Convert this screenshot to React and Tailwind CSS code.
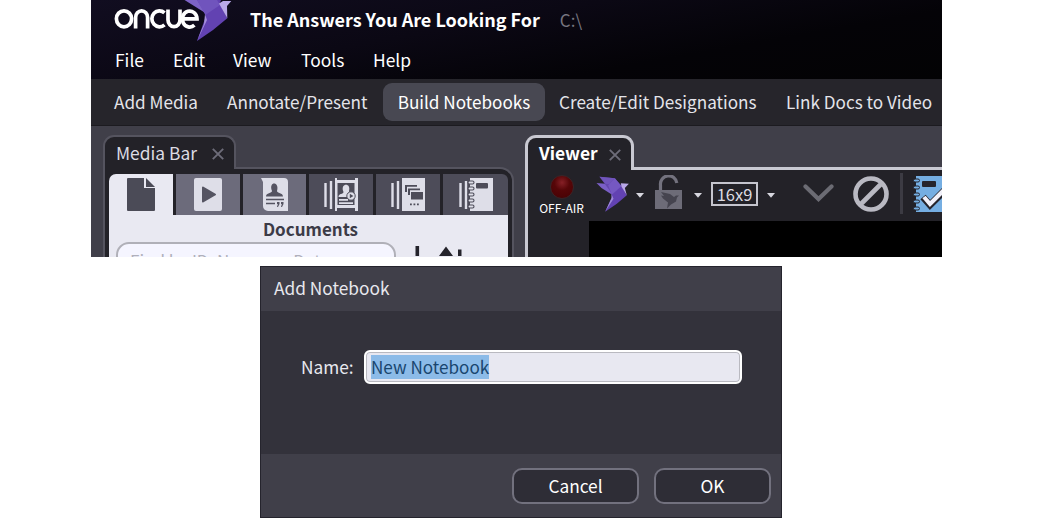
function Bird({ className }) {
  return (
    <svg className={className} viewBox="0 0 98 108">
      <path d="M1 21L28 23L46 36L48 56L16 36z" fill="#7a5fc6" />
      <path d="M10 2L56 7L66 34L48 54L26 24z" fill="#6447ae" />
      <path d="M10 2L56 7L44 26L28 23z" fill="#7055bb" />
      <path d="M56 7L78 32L92 58L62 83L27 107L47 64L46 50L36 28z" fill="#6242b2" />
      <path d="M56 7L76 30L47 56L36 28z" fill="#7558c2" />
      <path d="M46 54L52 68L27 107L46 66z" fill="#9d88d8" />
      <path d="M74 22L98 23L86 36L92 58L76 32z" fill="#b9a8e8" />
    </svg>
  );
}

function Close({ className }) {
  return (
    <svg className={className} viewBox="0 0 12 12" stroke="#6d6c79" strokeWidth="1.9">
      <path d="M.8.8l10.4 10.4M11.2.8L.8 11.2" />
    </svg>
  );
}

function Caret({ className }) {
  return (
    <svg className={className} viewBox="0 0 8 5">
      <path d="M0 0h8L4 4.8z" fill="#d7d7df" />
    </svg>
  );
}

function Header() {
  return (
    <header className="h-[79px] shrink-0 bg-[linear-gradient(170deg,#110d20_0%,#0b0814_40%,#040307_70%,#030304_100%)] text-white">
      <div className="flex h-[42px] items-start">
        <svg className="ml-[22px] h-[42px] w-[124px] shrink-0" viewBox="0 0 124 42">
          <g fill="none" stroke="#fff" strokeWidth="3.7">
            <ellipse cx="11" cy="18.800" rx="7.600" ry="8" />
            <path d="M22.600 28.600V17.500a6 6.600 0 0 1 12 0v11.100" />
            <path d="M51.500 12.800a7.600 8 0 1 0 0 12" />
            <path d="M55 9.500V20a6 6.600 0 0 0 12 0V9.500" />
            <path d="M70 18.800h14a7.300 8 0 1 0-2.600 6.400" />
          </g>
          <path d="M71.500 0L85 0L94 14z" fill="#7d63c6" />
          <path d="M84 0H108L106.700 3.300L114.300 18.300L100 30L84 41L92.300 18L92.300 13.300z" fill="#6242b2" />
          <path d="M84 0H104L107 5L92.300 15z" fill="#7054bd" />
          <path d="M92 14L94 20L84 41L91 24z" fill="#a48fda" />
          <path d="M106 3.500L110 1L118.300 1L114 6L114.300 18.300z" fill="#b9a8e8" />
        </svg>
        <div className="mt-[6px] pl-[13px] text-[18px] leading-[27px] font-bold tracking-[-0.02px] whitespace-nowrap">The Answers You Are Looking For</div>
        <div className="mt-[6px] pl-[20px] text-[17px] leading-[28px] text-[#777681]">C:\</div>
      </div>
      <nav className="flex h-[36px] pl-[24px] text-[17.400px] leading-[35px]">
        <span className="w-[58px]">File</span>
        <span className="w-[60px]">Edit</span>
        <span className="w-[68px]">View</span>
        <span className="w-[72px]">Tools</span>
        <span>Help</span>
      </nav>
    </header>
  );
}

function Workspaces() {
  return (
    <nav className="flex h-[47px] shrink-0 items-center border-b border-[#1c1b20] bg-[#26252b] pl-[23px] text-[17.150px] whitespace-nowrap text-[#e4e4ea]">
      <span className="w-[113px] shrink-0">Add Media</span>
      <span className="w-[156px] shrink-0">Annotate/Present</span>
      <span className="flex h-[38px] w-[162px] shrink-0 items-center justify-center rounded-[9px] bg-[#484852] text-white">Build Notebooks</span>
      <span className="w-[241px] shrink-0 pl-[14px]">Create/Edit Designations</span>
      <span>Link Docs to Video</span>
    </nav>
  );
}

function MediaIcons() {
  return (
    <div className="flex h-[41px] gap-[3px]">
      <div className="flex w-[64px] justify-center rounded-tl-[7px] bg-[#e9e9f2] pt-[4px]">
        <svg className="h-[33px] w-[28px]" viewBox="0 0 28 33" fill="#4b4b57">
          <path d="M1 0h16v10h11v22a1 1 0 0 1-1 1H1a1 1 0 0 1-1-1V1a1 1 0 0 1 1-1z" />
          <path d="M19 0l9 9h-9z" />
        </svg>
      </div>
      <div className="flex w-[64px] justify-center bg-[#6c6b7b] pt-[3px]">
        <svg className="h-[34px] w-[28px]" viewBox="0 0 28 34">
          <rect y="1" width="28" height="33" rx="2" fill="#dedee8" />
          <path d="M9 10.500l12 7-12 7z" fill="#555462" stroke="#555462" strokeWidth="2" strokeLinejoin="round" />
        </svg>
      </div>
      <div className="flex w-[64px] justify-center bg-[#6c6b7b] pt-[3px]">
        <svg className="h-[34px] w-[27px]" viewBox="0 0 27 34">
          <path d="M0 1h23a4 4 0 0 1 4 4v29H7a5 5 0 0 1-5-5V5z" fill="#dedee8" />
          <path d="M5 19.500c0-4 6-3 6-5.500-4-10 8-10 5 0 0 2.500 6 1.500 6 5.500z" fill="#555462" />
          <path d="M5 22.500h18M5 26.500h9" stroke="#555462" strokeWidth="1.500" />
          <path d="M16 25h2.500v2l-1.500 3h-1l.8-3H16zM20 25h2.500v2L21 30h-1l.8-3H20z" fill="#555462" />
        </svg>
      </div>
      <div className="flex w-[64px] justify-center bg-[#4d4c59] pt-[3px]">
        <svg className="h-[34px] w-[34px]" viewBox="0 0 34 34">
          <path d="M1.500 6v24M7 4v28" stroke="#dedee8" strokeWidth="2.400" />
          <path d="M11 1h2v2h18V1h3v33h-3v-3H13v3h-2z" fill="#dedee8" />
          <path d="M13.500 6h17v22h-17z" fill="#4d4c59" />
          <path d="M14.500 20c0-4 5-2.500 5-5-4-9 8-10 5.500-1 0 3 2 2.500 3 4v2z" fill="#dedee8" />
          <circle cx="27" cy="19" r="4.200" fill="#dedee8" stroke="#4d4c59" />
          <path d="M25.800 16.800l3.600 2.200-3.600 2.200z" fill="#4d4c59" />
          <path d="M15 22.800h9M15 26.200h14" stroke="#dedee8" strokeWidth="1.700" />
        </svg>
      </div>
      <div className="flex w-[64px] justify-center bg-[#4d4c59] pt-[3px]">
        <svg className="h-[34px] w-[34px]" viewBox="0 0 34 34">
          <path d="M1.500 6v24M7 4v28" stroke="#dedee8" strokeWidth="2.400" />
          <path d="M11 1h23v33H11z" fill="#dedee8" />
          <path d="M14 8h12v1.800H16V15h-2zM17 11.500h12v1.800H19V18h-2zM20 15h12v7.500H20z" fill="#4d4c59" />
          <path d="M19 26.500h1.800v1.800H19zM22.500 26.500h1.800v1.800h-1.800zM26 26.500h1.800v1.800H26z" fill="#4d4c59" />
        </svg>
      </div>
      <div className="flex w-[65px] justify-center rounded-tr-[6px] bg-[#4d4c59] pt-[3px]">
        <svg className="h-[34px] w-[34px]" viewBox="0 0 34 34">
          <path d="M1.500 6v24M7 4v28" stroke="#dedee8" strokeWidth="2.400" />
          <path d="M11 1h23v33H11z" fill="#dedee8" />
          <rect x="17" y="6" width="12" height="5.500" rx="1" fill="#4d4c59" />
          <g fill="#dedee8" stroke="#4d4c59" strokeWidth="1.100">
            <rect x="9" y="4" width="6" height="3" rx="1.500" />
            <rect x="9" y="10" width="6" height="3" rx="1.500" />
            <rect x="9" y="16" width="6" height="3" rx="1.500" />
            <rect x="9" y="22" width="6" height="3" rx="1.500" />
            <rect x="9" y="28" width="6" height="3" rx="1.500" />
          </g>
        </svg>
      </div>
    </div>
  );
}

function MediaBar() {
  return (
    <section className="mt-[9px] ml-[12px] flex w-[411px] shrink-0 flex-col">
      <div className="z-10 -mb-[2px] flex h-[34px] w-[133px] shrink-0 items-center rounded-t-[11px] border-2 border-b-0 border-[#55545f] bg-[#232228] pl-[11px] text-[17.400px] text-[#dcdce3]">
        <span className="w-[96px] leading-[20px] whitespace-nowrap">Media Bar</span>
        <Close className="mt-[2px] size-[12px]" />
      </div>
      <div className="h-[100px] rounded-tr-[14px] border-2 border-b-0 border-[#55545f] bg-[#232228] px-[4px] pt-[5px]">
        <MediaIcons />
        <div className="flex h-[60px] flex-col bg-[#e9e9f2]">
          <div className="h-[28px] pl-[4px] text-center text-[17px] leading-[27px] font-bold text-[#3c3b47]">Documents</div>
          <div className="flex">
            <div className="ml-[7px] h-[34px] w-[280px] rounded-[13px] border-2 border-[#b0b0b8] bg-[#f5f5ff] pt-[3px] pl-[12px] text-[17px] leading-[27px] whitespace-nowrap text-[#b0b0bb]">Find by ID, Name, or Date</div>
            <svg className="ml-[18px] h-[14px] w-[50px]" viewBox="0 0 50 14" fill="#25242c">
              <path d="M1.500 4h3.600v10h-3.600zM25 14l7-9.500 7 9.500zM44 7.500h3.500v7H44z" />
            </svg>
          </div>
        </div>
      </div>
    </section>
  );
}

function Viewer() {
  return (
    <section className="mt-[9px] ml-[11px] flex w-[440px] shrink-0 flex-col">
      <div className="z-10 -mb-[3px] flex h-[35px] w-[109px] shrink-0 items-center rounded-t-[11px] border-3 border-b-0 border-[#c9c9d2] bg-[#232228] pl-[11px] text-[17.400px] font-bold text-white">
        <span className="-mt-[2px] w-[70px] shrink-0">Viewer</span>
        <Close className="mt-[1px] size-[12px] shrink-0" />
      </div>
      <div className="h-[100px] border-t-3 border-l-3 border-[#c9c9d2] bg-[#232228]">
        <div className="flex h-[51px]">
          <div className="flex w-[66px] shrink-0 flex-col items-center pt-[5px] pl-[1px]">
            <div className="size-[24px] shrink-0 rounded-full border border-[#3a2528] bg-[radial-gradient(circle_at_50%_30%,#862026_0%,#560608_40%,#4c0305_75%,#280808_100%)]" />
            <span className="text-[12px] leading-[17px] text-white">OFF-AIR</span>
          </div>
          <Bird className="mt-[6px] ml-[2px] h-[36px] w-[33px] shrink-0" />
          <Caret className="mt-[23px] ml-[7px] h-[5px] w-[8px] shrink-0" />
          <svg className="mt-[5px] ml-[11px] h-[34px] w-[27px] shrink-0" viewBox="0 0 27 34">
            <path d="M5.500 16V10a8.200 8.200 0 0 1 16.300-2" fill="none" stroke="#73727e" strokeWidth="3.200" />
            <path d="M0 15h27v19H0z" fill="#6d6c78" />
            <path d="M6 17l9 2 4 3 2-1.500h3l-2 2-1 4-5 3-4 4 1-6-5-4-2-3 3 .5z" fill="#45444f" />
          </svg>
          <Caret className="mt-[23px] ml-[12px] h-[5px] w-[8px] shrink-0" />
          <div className="mt-[12px] ml-[9px] flex h-[24px] w-[47px] shrink-0 items-center justify-center border-2 border-[#c5c5ce] text-[16.500px] leading-[18px] text-[#dcdce3]">16x9</div>
          <Caret className="mt-[23px] ml-[9px] h-[5px] w-[8px] shrink-0" />
          <svg className="mt-[14px] ml-[28px] h-[18px] w-[31px] shrink-0" viewBox="0 0 31 18" fill="none" stroke="#6b6b73" strokeWidth="4.200" strokeLinecap="round">
            <path d="M2.500 2.500l13 12.500 13-12.500" />
          </svg>
          <svg className="mt-[6px] ml-[19px] size-[36px] shrink-0" viewBox="0 0 36 36" fill="none" stroke="#b9b9c2" strokeWidth="4.600">
            <path d="M18 2.500a15.500 15.500 0 1 1 0 31a15.500 15.500 0 1 1 0-31M7 29L29 7" />
          </svg>
          <div className="mt-[3px] ml-[11px] h-[41px] w-[3px] shrink-0 bg-[#3c3b43]" />
          <svg className="mt-[6px] ml-[10px] h-[36px] w-[34px] shrink-0" viewBox="0 0 34 36">
            <path d="M3 0h31v36H3z" fill="#75aee2" />
            <rect x="9" y="5" width="14" height="6" rx="1" fill="#25242c" />
            <path d="M10 21l7 8L33 13" fill="none" stroke="#25242c" strokeWidth="7" />
            <path d="M11 21l6 7L33 12" fill="none" stroke="#f1f1fa" strokeWidth="4.200" />
            <g fill="#75aee2" stroke="#25242c">
              <rect x=".5" y="3" width="6" height="3" rx="1.500" />
              <rect x=".5" y="10" width="6" height="3" rx="1.500" />
              <rect x=".5" y="17" width="6" height="3" rx="1.500" />
              <rect x=".5" y="24" width="6" height="3" rx="1.500" />
              <rect x=".5" y="31" width="6" height="3" rx="1.500" />
            </g>
          </svg>
        </div>
        <div className="ml-[61px] h-[50px] bg-black" />
      </div>
    </section>
  );
}

function Dialog() {
  return (
    <div className="mt-[9px] ml-[260px] flex h-[252px] w-[522px] flex-col border border-[#25242d] bg-[#33323b] text-[17.300px] text-[#e8e8ee]">
      <div className="h-[44px] bg-[#403f49] pl-[13px] leading-[41px]">Add Notebook</div>
      <div className="flex h-[143px] items-start pt-[39px] pl-[40px]">
        <span className="w-[63px] leading-[34px] whitespace-nowrap">Name:</span>
        <div className="flex h-[34px] w-[378px] items-center rounded-[6px] border-2 border-white bg-[#e8e8f1] px-[5px] shadow-[inset_0_0_0_1px_#b9b9c0]">
          <span className="bg-[#8cbbe8] text-[17.100px] leading-[24px] whitespace-nowrap text-[#19466f]">New Notebook</span>
        </div>
      </div>
      <div className="flex flex-1 gap-[15px] bg-[#403f49] pt-[14px] pl-[251px] text-white">
        <button className="h-[36px] w-[127px] rounded-[10px] border-2 border-[#72717e] bg-[#2e2d36] pb-px">Cancel</button>
        <button className="h-[36px] w-[117px] rounded-[10px] border-2 border-[#72717e] bg-[#2e2d36] pb-px">OK</button>
      </div>
    </div>
  );
}

export default function App() {
  return (
    <main className="h-[522px] w-[1044px] overflow-hidden bg-white font-['Noto_Sans_CJK_SC','Noto_Sans',sans-serif]">
      <div className="ml-[91px] flex h-[257px] w-[851px] flex-col overflow-hidden bg-[#403f49]">
        <Header />
        <Workspaces />
        <div className="flex h-[131px] items-start overflow-hidden">
          <MediaBar />
          <Viewer />
        </div>
      </div>
      <Dialog />
    </main>
  );
}
